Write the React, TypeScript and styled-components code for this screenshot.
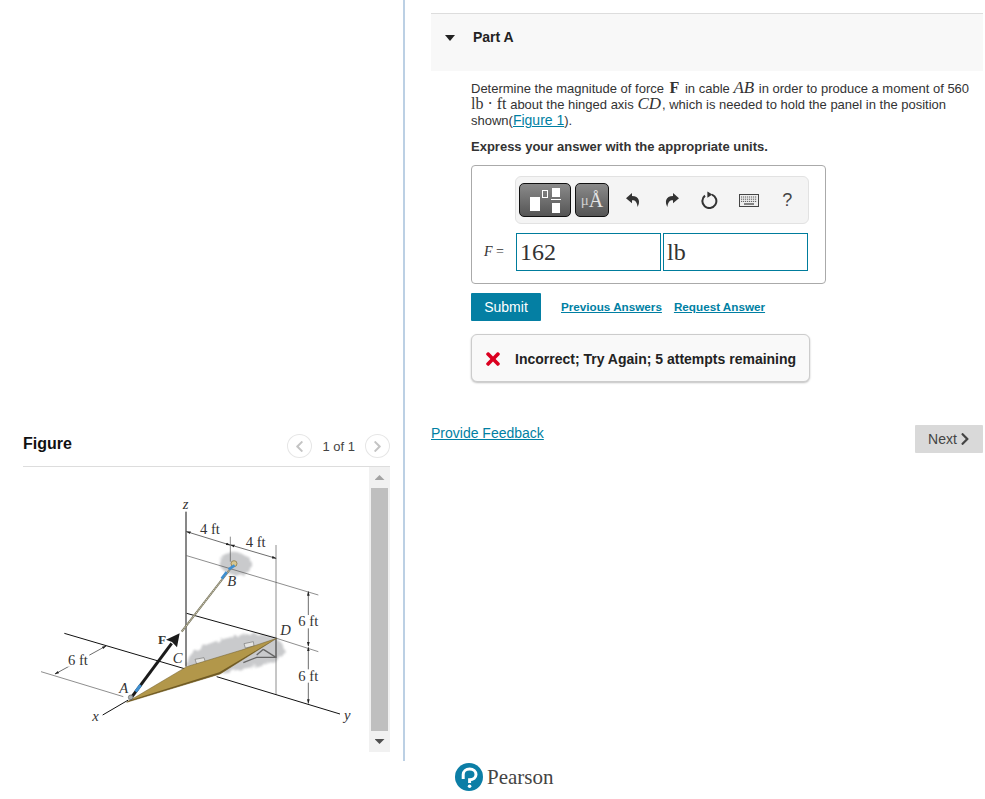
import styled, { createGlobalStyle } from "styled-components";
import { FaChevronLeft, FaChevronRight, FaTimes } from "react-icons/fa";

const TEAL = "#007fa3";

const GlobalStyle = createGlobalStyle`
  html, body {
    margin: 0;
    padding: 0;
    background: #fff;
    font-family: "Liberation Sans", Arial, sans-serif;
    font-size: 14px;
    color: #333;
  }
  * {
    box-sizing: border-box;
  }
`;

const Diagram = () => (
  <svg width="340" height="250" viewBox="0 0 1020 750" fill="none">
    <defs>
      <filter id="rough" x="-20%" y="-20%" width="140%" height="140%" colorInterpolationFilters="sRGB">
        <feTurbulence type="fractalNoise" baseFrequency="0.05" numOctaves="3" seed="4" />
        <feDisplacementMap in="SourceGraphic" scale="16" />
        <feGaussianBlur stdDeviation="2.5" />
      </filter>
      <marker id="tip" markerWidth="7" markerHeight="6" refX="6" refY="3" orient="auto-start-reverse">
        <path d="M0 1L7 3L0 5z" fill="#222" />
      </marker>
    </defs>
    <path
      d="M570 205C585 180 640 185 660 205C672 235 650 262 615 258C590 252 562 235 570 205z"
      fill="#c9cacc"
      filter="url(#rough)"
    />
    <path
      d="M468 525C470 490 520 462 590 445C650 425 730 425 760 465C775 500 745 510 700 525L570 550L480 535z"
      fill="#c9cacc"
      filter="url(#rough)"
    />
    <g stroke="#555" strokeWidth="2">
      <path d="M470 197L865 315" />
      <path d="M738 165V615" />
      <path d="M601 140V215" />
      <path d="M740 445L865 485" />
      <path d="M33 545L280 620" />
    </g>
    <g stroke="#222" strokeWidth="2" markerStart="url(#tip)" markerEnd="url(#tip)">
      <path d="M470 125L600 165" />
      <path d="M602 165L738 205" />
      <path d="M835 305V468" />
      <path d="M835 472V640" />
      <path d="M75 552L228 468" />
    </g>
    <path d="M468 65V530" stroke="#111" strokeWidth="3" />
    <path d="M470 370L740 445" stroke="#111" strokeWidth="3" />
    <path d="M103 430L470 538M560 560L930 672" stroke="#111" strokeWidth="3" />
    <path d="M218 675L295 630" stroke="#111" strokeWidth="3" />
    <g fill="#e4e4e2" stroke="#777" strokeWidth="2">
      <path d="M495 508L522 503L526 516L500 522z" />
      <path d="M642 461L670 455L672 468L646 474z" />
    </g>
    <g stroke="#666" strokeWidth="4">
      <path d="M738 447V502H680L640 518" />
      <path d="M700 478L738 502M680 495L700 478" />
    </g>
    <path d="M290 637L470 530L635 480L740 445L570 552z" fill="#b2974a" stroke="#6d5a28" strokeWidth="1.5" />
    <path d="M290 637L570 552L740 445L568 547L296 632z" fill="#6f5a24" />
    <path d="M455 425L610 225" stroke="#77745c" strokeWidth="6" />
    <path d="M455 425L610 225" stroke="#e4e0cc" strokeWidth="2.5" strokeDasharray="5 2" />
    <circle cx="612" cy="221" r="9" fill="#d8c78f" stroke="#7d6a35" strokeWidth="2" />
    <path d="M575 266L590 246M596 238L614 226" stroke="#3f8fd0" strokeWidth="8" />
    <path d="M300 628L425 460" stroke="#1b1b1b" strokeWidth="9" />
    <path d="M449 430L441 472L426 456L408 449z" fill="#1b1b1b" />
    <path d="M317 605L332 585" stroke="#3f8fd0" strokeWidth="9" />
    <circle cx="302" cy="622" r="7" fill="#aab0b2" stroke="#666" strokeWidth="2" />
    <g fontFamily="'Liberation Serif', serif" fontSize="44" fill="#333">
      <rect x="112" y="490" width="66" height="40" fill="#fff" />
      <rect x="804" y="375" width="62" height="40" fill="#fff" />
      <rect x="804" y="538" width="62" height="40" fill="#fff" />
      <text x="510" y="132">4 ft</text>
      <text x="647" y="170">4 ft</text>
      <text x="805" y="408">6 ft</text>
      <text x="805" y="572">6 ft</text>
      <text x="114" y="524">6 ft</text>
      <g fontStyle="italic">
        <text x="458" y="56">z</text>
        <text x="592" y="288">B</text>
        <text x="751" y="436">D</text>
        <text x="428" y="519">C</text>
        <text x="268" y="608">A</text>
        <text x="187" y="694">x</text>
        <text x="942" y="690">y</text>
      </g>
      <text x="384" y="463" fontSize="40" fontWeight="bold">F</text>
    </g>
  </svg>
);

const TemplateGlyph = () => (
  <svg width="32" height="26" viewBox="0 0 32 26">
    <rect x="1" y="9" width="10" height="14" fill="#fff" />
    <rect x="13.5" y="2.5" width="5" height="7" fill="none" stroke="#fff" />
    <rect x="23" y="0" width="8" height="9" fill="#fff" />
    <rect x="22" y="11" width="10" height="1" fill="#fff" />
    <rect x="23" y="15" width="8" height="10" fill="#fff" />
  </svg>
);

const UndoGlyph = () => (
  <svg width="16" height="16" viewBox="0 0 16 16">
    <path d="M7 1L1 6.2L7 11.2V8.2C10 8 12 9.5 12.6 15C15.4 10 14.5 4 7 4z" fill="#333" />
  </svg>
);

const RedoGlyph = () => (
  <svg width="16" height="16" viewBox="0 0 16 16">
    <path d="M9 1L15 6.2L9 11.2V8.2C6 8 4 9.5 3.4 15C0.6 10 1.5 4 9 4z" fill="#333" />
  </svg>
);

const ResetGlyph = () => (
  <svg width="18" height="18" viewBox="0 0 18 18" fill="none">
    <path d="M11 3.6A7 7 0 1 1 4 4.6" stroke="#333" strokeWidth="2" />
    <path d="M6.4 0.4L11.4 3.6L6.4 6.8z" fill="#333" />
  </svg>
);

const KeyboardGlyph = () => (
  <svg width="20" height="13" viewBox="0 0 20 13" fill="none">
    <rect x="0.5" y="0.5" width="19" height="12" fill="#eee" stroke="#444" />
    <path d="M2 3H18M2 5.2H18M2 7.4H18" stroke="#555" strokeDasharray="1.2 0.8" />
    <path d="M5 10H15" stroke="#555" strokeWidth="1.4" />
  </svg>
);

const PearsonGlyph = () => (
  <svg width="28" height="28" viewBox="0 0 28 28" fill="none">
    <circle cx="14" cy="14" r="14" fill="#0c7ea6" />
    <path d="M8.2 16V11.6C8.2 8.4 11 6 14.6 6C18.4 6 21 8.6 21 11.6C21 14.6 18.2 16.8 14.6 16.8V20" stroke="#fff" strokeWidth="3" />
    <circle cx="14.6" cy="23.2" r="1.8" fill="#fff" />
  </svg>
);

const App = () => {
  return (
    <Page>
      <GlobalStyle />
      <FigurePane>
        <FigureHeader>
          <FigureTitle>Figure</FigureTitle>
          <Pager>
            <PagerButton>
              <FaChevronLeft />
            </PagerButton>
            <PagerText>1 of 1</PagerText>
            <PagerButton>
              <FaChevronRight />
            </PagerButton>
          </Pager>
        </FigureHeader>
        <FigureBody>
          <FigureImage>
            <Diagram />
          </FigureImage>
          <Scrollbar>
            <ScrollArrow $up />
            <ScrollThumb />
            <ScrollArrow />
          </Scrollbar>
        </FigureBody>
      </FigurePane>

      <QuestionPane>
        <PartHeader>
          <Caret />
          <PartTitle>Part A</PartTitle>
        </PartHeader>
        <PartContent>
          <Prompt>
            Determine the magnitude of force <MathBold>F</MathBold> in cable <MathItalic>AB</MathItalic> in order to
            produce a moment of 560 <br />
            <MathUnit>lb · ft</MathUnit> about the hinged axis <MathItalic>CD</MathItalic>, which is needed to hold the
            panel in the position <br />
            shown(<TextLink href="#">Figure 1</TextLink>).
          </Prompt>
          <Instruction>Express your answer with the appropriate units.</Instruction>

          <AnswerBox>
            <Toolbar>
              <ToolButton $wide>
                <TemplateGlyph />
              </ToolButton>
              <ToolButton>
                <Micro>μ</Micro>
                <Angstrom>Å</Angstrom>
              </ToolButton>
              <IconGroup>
                <IconSlot>
                  <UndoGlyph />
                </IconSlot>
                <IconSlot>
                  <RedoGlyph />
                </IconSlot>
                <IconSlot>
                  <ResetGlyph />
                </IconSlot>
                <IconSlot>
                  <KeyboardGlyph />
                </IconSlot>
                <IconSlot>
                  <HelpMark>?</HelpMark>
                </IconSlot>
              </IconGroup>
            </Toolbar>
            <InputRow>
              <InputLabel>
                <em>F</em> =
              </InputLabel>
              <AnswerInput readOnly value="162" />
              <AnswerInput readOnly value="lb" />
            </InputRow>
          </AnswerBox>

          <ActionRow>
            <SubmitButton>Submit</SubmitButton>
            <ActionLinks>
              <ActionLink href="#">Previous Answers</ActionLink>
              <ActionLink href="#">Request Answer</ActionLink>
            </ActionLinks>
          </ActionRow>

          <Feedback>
            <FeedbackIcon>
              <FaTimes />
            </FeedbackIcon>
            <FeedbackText>Incorrect; Try Again; 5 attempts remaining</FeedbackText>
          </Feedback>
        </PartContent>

        <FooterRow>
          <FooterLink href="#">Provide Feedback</FooterLink>
          <NextButton>
            Next
            <FaChevronRight />
          </NextButton>
        </FooterRow>

        <Brand>
          <PearsonGlyph />
          <BrandName>Pearson</BrandName>
        </Brand>
      </QuestionPane>
    </Page>
  );
};

export default App;

const Page = styled.div`
  display: flex;
  width: 985px;
  height: 799px;
  overflow: hidden;
`;

const FigurePane = styled.section`
  display: flex;
  flex-direction: column;
  justify-content: flex-end;
  flex: 0 0 405px;
  min-width: 0;
  height: 761px;
  padding: 0 13px 9px 23px;
  border-right: 2px solid #bcd0e4;
`;

const FigureHeader = styled.div`
  display: flex;
  align-items: center;
  justify-content: space-between;
  height: 37px;
  padding-bottom: 4px;
  border-bottom: 1px solid #ddd;
`;

const FigureTitle = styled.h2`
  margin: 0 0 4px;
  font-size: 16px;
  font-weight: bold;
  color: #111;
`;

const Pager = styled.div`
  display: flex;
  align-items: center;
  gap: 10px;
`;

const PagerButton = styled.span`
  display: flex;
  align-items: center;
  justify-content: center;
  width: 25px;
  height: 24px;
  border: 1px solid #e6e6e6;
  border-radius: 50%;
  font-size: 13px;
  color: #c4c4c4;
`;

const PagerText = styled.span`
  font-size: 13px;
  color: #444;
`;

const FigureBody = styled.div`
  display: flex;
  height: 285px;
`;

const FigureImage = styled.div`
  flex: 1;
  min-width: 0;
  overflow: hidden;
  padding: 23px 0 0 7px;
`;

const Scrollbar = styled.div`
  display: flex;
  flex-direction: column;
  align-items: center;
  flex: 0 0 21px;
  background: #f1f1f1;
`;

const ScrollArrow = styled.div<{ $up?: boolean }>`
  flex: 0 0 21px;
  width: 10px;
  background: ${({ $up }) => ($up ? "#a3a3a3" : "#505050")};
  clip-path: ${({ $up }) =>
    $up ? "polygon(50% 38%, 100% 62%, 0 62%)" : "polygon(0 38%, 100% 38%, 50% 62%)"};
`;

const ScrollThumb = styled.div`
  flex: 1;
  width: 17px;
  background: #bfbfbf;
`;

const QuestionPane = styled.main`
  flex: 0 0 552px;
  margin-left: 26px;
  padding-top: 13px;
`;

const PartHeader = styled.header`
  display: flex;
  align-items: flex-start;
  height: 58px;
  padding: 15px 0 0 14px;
  background: #f8f8f8;
  border-top: 1px solid #ddd;
`;

const Caret = styled.span`
  width: 0;
  height: 0;
  margin: 6px 18px 0 0;
  border-left: 5.5px solid transparent;
  border-right: 5.5px solid transparent;
  border-top: 6px solid #222;
`;

const PartTitle = styled.h3`
  margin: 0;
  font-size: 14px;
  font-weight: bold;
  color: #222;
`;

const PartContent = styled.div`
  padding: 10px 0 0 40px;
`;

const Prompt = styled.p`
  margin: 0;
  font-size: 13px;
  line-height: 16px;
  white-space: nowrap;
  color: #333;
`;

const MathBold = styled.b`
  margin: 0 2px;
  font-family: "Liberation Serif", serif;
  font-size: 16px;
  line-height: 0;
`;

const MathItalic = styled.i`
  margin-right: 1px;
  font-family: "Liberation Serif", serif;
  font-size: 17px;
  line-height: 0;
`;

const MathUnit = styled.span`
  font-family: "Liberation Serif", serif;
  font-size: 16px;
  line-height: 0;
`;

const TextLink = styled.a`
  color: ${TEAL};
  text-decoration: underline;
  font-size: 14px;
  line-height: 0;
`;

const FooterLink = styled(TextLink)`
  line-height: 16px;
`;

const Instruction = styled.p`
  margin: 10px 0;
  font-size: 13px;
  line-height: 16px;
  font-weight: bold;
  color: #333;
`;

const AnswerBox = styled.div`
  width: 355px;
  height: 119px;
  padding: 10px 17px 12px 12px;
  border: 1px solid #aaa;
  border-radius: 4px;
`;

const Toolbar = styled.div`
  display: flex;
  align-items: center;
  gap: 4px;
  width: 294px;
  height: 48px;
  margin-left: 31px;
  padding: 0 3px;
  background: #f4f4f4;
  border: 1px solid #e2e2e2;
  border-radius: 6px;
`;

const ToolButton = styled.div<{ $wide?: boolean }>`
  display: flex;
  align-items: center;
  justify-content: center;
  flex: 0 0 ${({ $wide }) => ($wide ? "52px" : "34px")};
  height: 34px;
  padding-top: 1px;
  background: linear-gradient(#8a8a8a, #555);
  border: 1px solid #111;
  border-radius: 5px;
  font-family: "Liberation Serif", serif;
  color: #e4e4e4;
`;

const Micro = styled.span`
  font-size: 15px;
  color: #cfcfcf;
`;

const Angstrom = styled.span`
  font-size: 20px;
`;

const IconGroup = styled.div`
  display: flex;
  margin-left: 1px;
`;

const IconSlot = styled.div`
  display: flex;
  align-items: center;
  justify-content: center;
  width: 38.5px;
  height: 34px;
`;

const HelpMark = styled.span`
  font-size: 18px;
  color: #444;
`;

const InputRow = styled.div`
  display: flex;
  align-items: center;
  gap: 2px;
  margin-top: 9px;
`;

const InputLabel = styled.label`
  flex: 0 0 31px;
  margin-right: -1px;
  font-family: "Liberation Serif", serif;
  font-size: 14px;
  color: #333;
`;

const AnswerInput = styled.input`
  width: 145px;
  height: 38px;
  padding: 0 3px;
  border: 1px solid #007c9c;
  outline: none;
  background: #fff;
  font-family: "Liberation Serif", serif;
  font-size: 24px;
  color: #333;
`;

const ActionRow = styled.div`
  display: flex;
  align-items: center;
  gap: 20px;
  margin-top: 9px;
`;

const SubmitButton = styled.button`
  width: 70px;
  height: 28px;
  padding: 0;
  border: 0;
  border-radius: 1px;
  background: #047fa3;
  font-family: inherit;
  font-size: 14px;
  color: #fff;
`;

const ActionLinks = styled.div`
  display: flex;
  gap: 12px;
  margin-top: -2px;
`;

const ActionLink = styled.a`
  font-size: 11.7px;
  font-weight: bold;
  color: ${TEAL};
  text-decoration: underline;
`;

const Feedback = styled.div`
  display: flex;
  align-items: center;
  width: 339px;
  height: 48px;
  margin-top: 13px;
  padding: 1px 0 0 11px;
  background: #f9f9f9;
  border: 1px solid #ccc;
  border-radius: 6px;
  box-shadow: 0 1px 2px rgba(0, 0, 0, 0.25);
`;

const FeedbackIcon = styled.span`
  display: flex;
  flex: 0 0 32px;
  font-size: 20px;
  color: #db0020;
`;

const FeedbackText = styled.span`
  font-size: 14px;
  font-weight: bold;
  color: #222;
`;

const FooterRow = styled.div`
  display: flex;
  align-items: flex-start;
  justify-content: space-between;
  margin-top: 43px;
`;

const NextButton = styled.button`
  display: flex;
  align-items: center;
  justify-content: center;
  gap: 1px;
  width: 68px;
  height: 28px;
  padding: 0 0 0 2px;
  border: 0;
  border-radius: 1px;
  background: #d9d9d9;
  font-family: inherit;
  font-size: 14px;
  color: #444;
`;

const Brand = styled.div`
  display: flex;
  align-items: center;
  gap: 4px;
  margin: 310px 0 0 24px;
`;

const BrandName = styled.span`
  font-family: "Liberation Serif", serif;
  font-size: 21px;
  color: #444;
`;
